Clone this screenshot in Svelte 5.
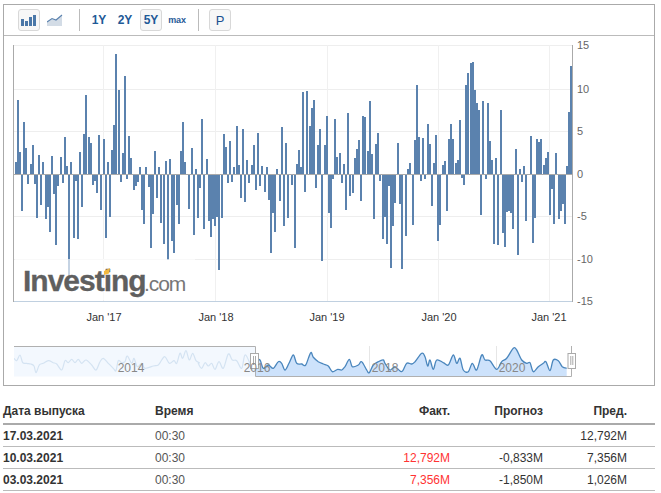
<script>
  // bars are "x:y" pairs in page pixels, y = the far end of the bar
  const parse = (s) => s.trim().split(/\s+/).map((p) => p.split(':').map(Number));
  const up = parse(`15:162 17:100 19:152 23:122 25:148 30:164 32:145 38:155 42:162 51:156 60:157 64:137 66:166 70:162 79:152 83:134 85:95 88:137 90:143 98:135 103:139 107:162 111:150 113:125 115:54 118:90 122:153 124:76 128:136 130:158 139:167 145:167 154:151 158:167 165:161 169:159 180:151 182:122 184:162 191:148 195:169 201:119 206:159 223:134 225:147 229:141 233:167 236:126 238:165 242:129 246:160 251:165 253:145 257:133 261:166 266:167 276:169 281:127 285:143 296:164 298:150 300:167 302:92 306:91 309:126 311:108 313:100 317:145 319:129 324:145 326:116
    334:119 336:157 339:153 343:164 347:113 354:158 356:149 358:140 362:116 364:117 367:151 369:101 371:154 375:144 377:133 397:143 407:169 409:163 414:140 416:85 418:137 422:138 427:124 429:144 433:163 435:135 442:165 444:161 448:139 450:124 452:139 455:163 457:160 459:120 465:85 467:73 470:63 472:62 474:90 476:103 478:110 482:101 487:103 489:141 491:160 495:158 500:110 515:149 519:169 523:166 530:136 536:139 538:142 540:139 543:165 545:158 547:152 555:153 566:166 568:112 570:66`);
  const down = parse(`21:211 27:184 34:184 36:218 40:205 45:219 47:207 49:232 53:194 55:245 57:186 62:183 68:275 73:238 75:181 77:239 81:207 92:185 94:181 96:193 100:210 105:238 109:217 120:182 126:179 133:190 135:186 137:182 141:210 143:224 148:187 150:248 152:214 156:198 160:223 163:244 167:260 171:241 173:253 176:205 178:224 188:209 193:235 197:218 199:188 203:229 208:221 210:237 212:219 214:226 216:217 218:270 221:218 227:183 231:182 240:198 244:202 248:183 255:190 259:186 264:192 268:200 270:253 272:213 274:232 279:201 283:226 287:218 291:185 294:248 304:192 315:188 321:261 328:213
    330:228 332:179 341:183 345:210 349:196 352:193 360:201 373:219 379:181 382:239 384:217 386:244 388:186 390:268 392:226 394:203 399:204 401:269 405:236 412:225 420:181 424:179 431:206 437:241 439:225 446:211 461:178 463:185 480:215 485:179 493:244 497:245 502:233 504:247 506:212 508:211 510:213 512:229 517:255 521:182 525:221 532:243 534:218 549:215 551:189 553:224 558:219 560:211 562:204 564:224`);

  const hLines = [45, 89, 131, 216, 259];
  const vLines = [103.5, 215.5, 327.5, 438.5, 549.5];
  const xLabels = [['Jan \'17', 104], ['Jan \'18', 216], ['Jan \'19', 327], ['Jan \'20', 439], ['Jan \'21', 549]];
  const yLabels = [['15', 49], ['10', 93], ['5', 135], ['0', 178], ['-5', 220], ['-10', 263], ['-15', 305]];
  const navYears = [['2014', 131, 115], ['2016', 257, 246], ['2018', 385, 369], ['2020', 512, 496]];

  // navigator line, read off three zoomed crops
  const seg = (bx, s) => s.trim().split(/\s+/).map((p) => { const [a, b] = p.split(',').map(Number); return [bx + a / 3, 340 + b / 3]; });
  const pts = [
    ...seg(10, '12,55 20,62 30,45 38,68 50,70 62,72 72,78 78,98 88,75 100,70 115,62 130,68 140,72 155,90 165,62 175,68 185,58 195,68 205,58 215,70 228,60 245,75 258,90 270,65 280,55 295,70 310,85 318,92 325,62 335,68 345,65 352,48 365,70 372,55 382,80 395,70 405,85 430,78 445,75 455,60 465,50 478,70 492,62 500,70 510,40 518,55 528,32 538,60 548,40 558,62 568,68'),
    ...seg(195, '10,70 20,85 30,68 40,78 50,70 60,88 72,65 85,85 100,42 112,60 125,62 140,85 150,45 165,70 175,95 185,65 195,60 205,85 220,75 235,85 250,65 260,70 270,90 282,70 295,45 305,70 320,72 332,75 347,38 355,52 370,65 385,72 400,78 412,95 428,88 440,90 450,80 463,58 472,80 490,75 500,65 515,90 523,98 535,75 550,65 565,60'),
    ...seg(385, '0,70 15,90 30,80 50,95 65,70 80,72 90,65 110,40 120,50 128,78 135,60 145,88 155,60 175,68 190,75 205,45 215,70 225,55 235,90 250,95 262,70 275,90 290,45 300,60 315,62 335,88 350,65 365,55 385,25 395,30 410,60 425,70 435,68 445,95 460,80 475,70 483,65 495,92 505,60 520,62 532,80 545,85')
  ];
  // catmull-rom, so the curve goes through every point read off the reference
  function smooth(list) {
    let d = `M${list[0][0].toFixed(1)} ${list[0][1].toFixed(1)}`;
    for (let i = 0; i < list.length - 1; i++) {
      const p0 = list[i - 1] || list[i], p1 = list[i], p2 = list[i + 1], p3 = list[i + 2] || p2;
      const c1x = p1[0] + (p2[0] - p0[0]) / 6, c1y = p1[1] + (p2[1] - p0[1]) / 6;
      const c2x = p2[0] - (p3[0] - p1[0]) / 6, c2y = p2[1] - (p3[1] - p1[1]) / 6;
      d += `C${c1x.toFixed(1)} ${c1y.toFixed(1)} ${c2x.toFixed(1)} ${c2y.toFixed(1)} ${p2[0].toFixed(1)} ${p2[1].toFixed(1)}`;
    }
    return d;
  }
  const navLine = smooth(pts);
  const navArea = navLine + `V376H${pts[0][0].toFixed(1)}Z`;

  const rows = [
    { date: '17.03.2021', time: '00:30', fact: '', fc: '', prev: '12,792M' },
    { date: '10.03.2021', time: '00:30', fact: '12,792M', fc: '-0,833M', prev: '7,356M' },
    { date: '03.03.2021', time: '00:30', fact: '7,356M', fc: '-1,850M', prev: '1,026M' }
  ];
</script>

<div class="frame">
  <div class="bar">
    <button class="btn on" aria-label="Bars">
      <svg width="16" height="12" viewBox="0 0 16 12"><path d="M0 5h3v7H0zM4 7h3v5H4zM8 3h3v9H8zM12 1h3v11h-3z" fill="#4a77a8"/></svg>
    </button>
    <button class="btn" aria-label="Line">
      <svg width="16" height="14" viewBox="0 0 16 14"><path d="M0 9 5 5.500l4 1.500 6-5v11H0z" fill="#d3dce6"/><path d="M0 9 5 5.500l4 1.500 6-5" fill="none" stroke="#5b82ae" stroke-width="1.100"/></svg>
    </button>
    <span class="sep"></span>
    <button class="btn rng">1Y</button>
    <button class="btn rng">2Y</button>
    <button class="btn rng on">5Y</button>
    <button class="btn rng small">max</button>
    <span class="sep sep2"></span>
    <button class="btn rng on plain">P</button>
  </div>

  <svg class="chart" width="650" height="349" viewBox="4 36 650 349">
    {#each hLines as y}<line x1="14" x2="572" y1={y + .5} y2={y + .5} stroke="#eee" />{/each}
    {#each vLines as x}<line x1={x} x2={x} y1="45" y2="301" stroke="#f0f0f0" />{/each}
    <line x1="14" x2="572" y1="174.5" y2="174.5" stroke="#aaa" />
    {#each up as [x, y]}<rect x={x} y={y} width="2" height={174 - y} fill="#5b82ae" />{/each}
    {#each down as [x, y]}<rect x={x} y="175" width="2" height={y - 175} fill="#5b82ae" />{/each}
    <line x1="13.5" x2="13.5" y1="45" y2="302" stroke="#aaa" />
    <line x1="572.5" x2="572.5" y1="45" y2="302" stroke="#aaa" />
    <line x1="14" x2="572" y1="301.5" y2="301.5" stroke="#c0d0e0" />

    <rect x="15" y="259" width="180" height="41" fill="#fff" opacity=".65" />
    <text class="logo" x="23" y="291">Investing</text>
    <text class="logo2" x="144" y="291">.com</text>
    <path d="M104 271l6-3-1 5.500-5 1.500z" fill="#f3b93f" />

    {#each xLabels as [t, x]}<text class="xl" x={x} y="321">{t}</text>{/each}
    {#each yLabels as [t, y]}<text class="yl" x="577" y={y}>{t}</text>{/each}

    <!-- navigator -->
    {#each navYears as [, , x]}<line x1={x + .5} x2={x + .5} y1="346" y2="376" stroke="#e6e6e6" />{/each}
    <clipPath id="navl"><rect x="14" y="340" width="241" height="40" /></clipPath>
    <clipPath id="navr"><rect x="255" y="340" width="317" height="40" /></clipPath>
    <rect x="14" y="347" width="241" height="29.500" fill="#f3f8fe" />
    <path d={navArea} fill="#cde2fb" clip-path="url(#navr)" />
    <path d={navLine} fill="none" stroke="#d4e3f2" stroke-width="1.200" clip-path="url(#navl)" />
    <path d={navLine} fill="none" stroke="#4a86bd" stroke-width="1.300" clip-path="url(#navr)" />
    <path d="M14 346.500H255.500V376.500H571.500V346" fill="none" stroke="#b0b0b0" />
    <g fill="#fff" stroke="#aaa">
      <rect x="250.500" y="353.500" width="8" height="15" />
      <rect x="568" y="353.500" width="7.500" height="15" />
    </g>
    <path d="M253.500 356v9M255.500 356v9M570.800 356v9M572.800 356v9" stroke="#aaa" />
    {#each navYears as [t, x]}<text class="ny" x={x} y="372">{t}</text>{/each}
  </svg>
</div>

<table>
  <colgroup><col class="c1" /><col class="c2" /><col class="c3" /><col class="c4" /><col class="c5" /></colgroup>
  <thead>
    <tr><th>Дата выпуска</th><th>Время</th><th class="r">Факт.</th><th class="r">Прогноз</th><th class="r last">Пред.</th></tr>
  </thead>
  <tbody>
    {#each rows as row}
      <tr>
        <td class="date">{row.date}</td>
        <td class="time">{row.time}</td>
        <td class="r red">{row.fact}</td>
        <td class="r">{row.fc}</td>
        <td class="r last">{row.prev}</td>
      </tr>
    {/each}
  </tbody>
</table>

<style>
  :global(body) { margin: 0; background: #fff; font-family: "Liberation Sans", Arial, sans-serif; }
  .frame { box-sizing: border-box; width: 652px; height: 382px; margin: 4px 0 0 3px; border: 1px solid #aaa; }
  .bar { box-sizing: border-box; height: 31px; padding: 4px 0 4px 14px; border-bottom: 1px solid #bbb; display: flex; align-items: flex-start; }
  .btn { box-sizing: border-box; width: 22px; height: 22px; padding: 0; margin: 0; border: 1px solid transparent; border-radius: 3px; background: none; display: flex; align-items: center; justify-content: center; font-family: inherit; }
  .btn + .btn { margin-left: 4px; }
  .on { border-color: #d8d8d8; background: #f7f7f7; }
  .sep { width: 1px; height: 22px; background: #bbb; margin: 0 8px 0 13px; }
  .sep2 { margin: 0 10px 0 10px; }
  .rng { font-size: 12px; font-weight: 700; color: #1f5a97; }
  .small { font-size: 9px; letter-spacing: -.2px; }
  .plain { font-weight: 400; font-size: 13px; color: #1a5090; }
  .chart { display: block; }
  .logo { font-size: 30px; font-weight: 700; letter-spacing: -1px; fill: #5f5f5f; stroke: #5f5f5f; stroke-width: .3px; }
  .logo2 { font-size: 21px; letter-spacing: -1.100px; fill: #777; }
  .xl { font-size: 11px; text-anchor: middle; fill: #333; }
  .yl { font-size: 11px; fill: #666; }
  .ny { font-size: 12px; text-anchor: middle; fill: #888; }
  table { box-sizing: border-box; width: 652px; margin: 13px 0 0 3px; border-collapse: collapse; table-layout: fixed; font-size: 12px; color: #333; }
  .c1 { width: 152px; } .c2 { width: 150px; } .c3 { width: 145px; } .c4 { width: 93px; }
  th { height: 24px; padding: 0; text-align: left; font-weight: 700; border-bottom: 2px solid #aaa; }
  td { height: 21px; padding: 0; border-bottom: 1px solid #bbb; }
  .r { text-align: right; }
  .last { padding-right: 28px; }
  .date { font-weight: 700; }
  .time { color: #555; }
  .red { color: #f33; }
</style>
